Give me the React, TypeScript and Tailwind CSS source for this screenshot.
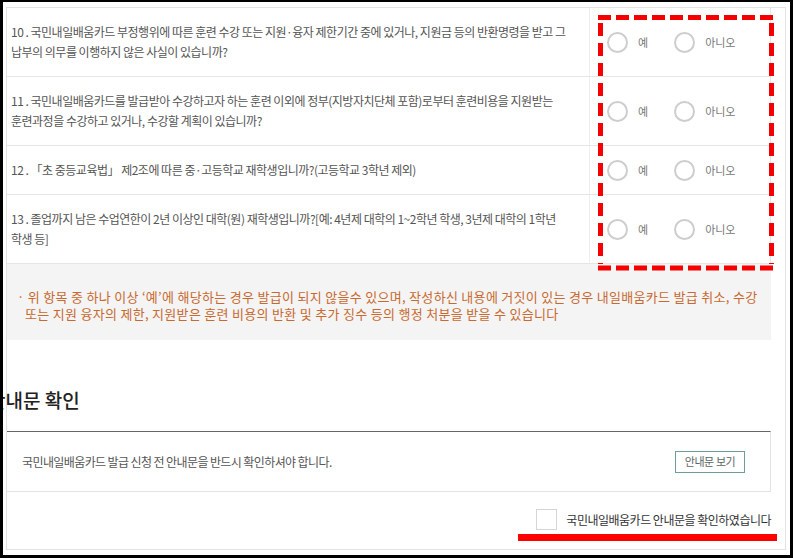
// 국민내일배움카드 — 자격 확인 문항 + 안내문 확인 (screenshot recreation)

const QUESTIONS: string[][] = [
  [
    "10 . 국민내일배움카드 부정행위에 따른 훈련 수강 또는 지원·융자 제한기간 중에 있거나, 지원금 등의 반환명령을 받고 그",
    "납부의 의무를 이행하지 않은 사실이 있습니까?",
  ],
  [
    "11 . 국민내일배움카드를 발급받아 수강하고자 하는 훈련 이외에 정부(지방자치단체 포함)로부터 훈련비용을 지원받는",
    "훈련과정을 수강하고 있거나, 수강할 계획이 있습니까?",
  ],
  ["12 . 「초 중등교육법」 제2조에 따른 중·고등학교 재학생입니까?(고등학교 3학년 제외)"],
  [
    "13 . 졸업까지 남은 수업연한이 2년 이상인 대학(원) 재학생입니까?[예: 4년제 대학의 1~2학년 학생, 3년제 대학의 1학년",
    "학생 등]",
  ],
];

function Radio({ label }: { label: string }) {
  return (
    <label className="flex items-center gap-[10px]">
      <span className="block h-[21px] w-[21px] rounded-full border-2 border-[#cdcdcd] bg-white" />
      <span className="text-[11px] text-[#777]">{label}</span>
    </label>
  );
}

function QuestionRow({ lines }: { lines: string[] }) {
  return (
    <div className="flex border-b border-[#e6e6e6]">
      <div className="w-[582px] py-[14px] pl-[4px] text-[12px] leading-[20px] tracking-[-0.5px] text-[#555] whitespace-nowrap">
        {lines.map((l, i) => (
          <div key={i}>{l}</div>
        ))}
      </div>
      <div className="flex flex-1 items-center gap-[26px] border-l border-[#ededed] pl-[17px]">
        <Radio label="예" />
        <Radio label="아니오" />
      </div>
    </div>
  );
}

// 빨간 점선 박스 — 스크린샷 위 주석 표시
function DashedBox() {
  return (
    <svg className="pointer-events-none absolute left-[594px] top-[13px]" width="178" height="256">
      <g stroke="#f40000" strokeWidth="5" strokeDasharray="13 5">
        <line x1="1" y1="2.5" x2="177" y2="2.5" />
        <line x1="1" y1="253" x2="177" y2="253" />
      </g>
      <g stroke="#f40000" strokeWidth="5" strokeDasharray="13 7">
        <line x1="3.5" y1="8" x2="3.5" y2="249" />
        <line x1="174.5" y1="8" x2="174.5" y2="249" />
      </g>
    </svg>
  );
}

export default function App() {
  return (
    <div className="relative flex h-[558px] w-[793px] flex-col overflow-hidden border-t-2 border-b-[3px] border-l-[3px] border-r-[3px] border-black bg-white pt-[5px] pr-[4px] pb-[5px] pl-[3px] font-['Noto_Sans_CJK_KR','Noto_Sans',sans-serif]">
      <div className="flex-1 border border-[#e3e3e3]">
        <div className="w-[764px]">
          {/* 문항 표 */}
          <div className="border-r border-[#e6e6e6]">
            {QUESTIONS.map((q, i) => (
              <QuestionRow key={i} lines={q} />
            ))}
          </div>

          {/* 주의 문구 */}
          <div className="bg-[#f4f4f4] pt-[24px] pb-[18px] pl-[18px] text-[13px] leading-[17px] tracking-[0.3px] text-[#c8692f] whitespace-nowrap">
            <div className="-indent-[8px]">· 위 항목 중 하나 이상 ‘예’에 해당하는 경우 발급이 되지 않을수 있으며, 작성하신 내용에 거짓이 있는 경우 내일배움카드 발급 취소, 수강</div>
            <div>또는 지원 융자의 제한, 지원받은 훈련 비용의 반환 및 추가 징수 등의 행정 처분을 받을 수 있습니다</div>
          </div>

          <h2 className="mt-[47px] -ml-[19px] text-[19px] font-medium leading-[26px] text-[#222]">안내문 확인</h2>

          {/* 안내문 박스 */}
          <div className="mt-[18px] flex h-[61px] items-center justify-between border-t border-t-[#666] border-b border-b-[#e3e3e3] border-r border-r-[#e3e3e3] pl-[15px] pr-[25px]">
            <p className="text-[12px] tracking-[-0.6px] text-[#555]">
              국민내일배움카드 발급 신청 전 안내문을 반드시 확인하셔야 합니다.
            </p>
            <button
              type="button"
              className="h-[22px] w-[70px] border border-[#6f9c9c] bg-white text-[11px] tracking-[-0.4px] text-[#5b6666]"
            >
              안내문 보기
            </button>
          </div>

          {/* 확인 체크 */}
          <div className="relative mt-[17px] flex items-center justify-end gap-[9px]">
            <span className="block h-[21px] w-[21px] border border-[#d5d5d5] bg-white" />
            <span className="text-[12px] tracking-[-0.5px] text-[#333]">국민내일배움카드 안내문을 확인하였습니다</span>
            <span className="absolute left-[511px] top-[25px] h-[7px] w-[259px] bg-[#ff0000]" />
          </div>
        </div>
      </div>

      <DashedBox />
    </div>
  );
}
